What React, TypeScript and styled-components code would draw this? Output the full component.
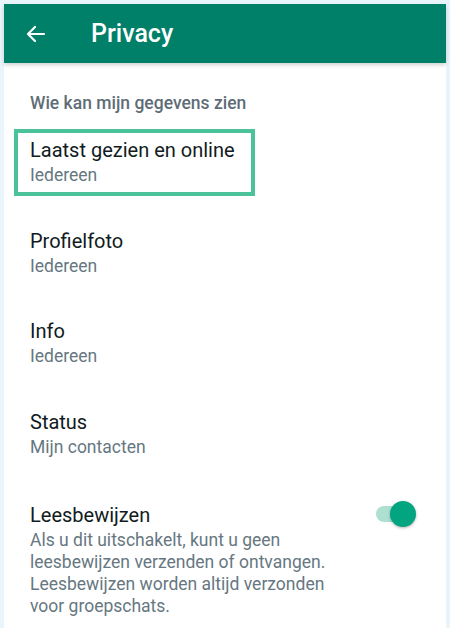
import React from "react";
import styled, { createGlobalStyle } from "styled-components";

const GlobalStyle = createGlobalStyle`
  html, body {
    margin: 0;
    padding: 0;
    background: #eaf4fb;
    font-family: Roboto, "Noto Sans", "Liberation Sans", sans-serif;
  }
`;

const Frame = styled.div`
  width: 450px;
  height: 628px;
  box-sizing: border-box;
  padding: 4px 4px 5px 4px;
  display: flex;
  flex-direction: column;
`;

const Header = styled.header`
  height: 59px;
  flex-shrink: 0;
  background: #008069;
  display: flex;
  align-items: center;
  padding-left: 20px;
  box-shadow: 0 2px 4px rgba(0, 0, 0, 0.18);
  position: relative;
  z-index: 1;
`;

const BackButton = styled.button`
  border: 0;
  background: none;
  padding: 0;
  display: flex;
  color: #fff;
  cursor: pointer;
`;

const Title = styled.h1`
  margin: 0 0 0 43px;
  font-size: 25px;
  font-weight: 500;
  color: #fff;
`;

const Card = styled.main`
  flex: 1;
  background: #fff;
  padding-top: 30px;
`;

const SectionTitle = styled.h2`
  margin: 0 0 16px 26px;
  font-size: 17.5px;
  line-height: 20px;
  font-weight: 500;
  color: #5f6d77;
`;

const Row = styled.div<{ $active?: boolean; $gap?: number }>`
  display: flex;
  align-items: flex-start;
  justify-content: space-between;
  margin: 0 0 ${(p) => p.$gap ?? 23.5}px 10px;
  padding: 3px 16px 6px 12px;
  border: 4px solid ${(p) => (p.$active ? "#4cc29a" : "transparent")};
  width: ${(p) => (p.$active ? "fit-content" : "auto")};
  margin-right: ${(p) => (p.$active ? "0" : "10px")};
`;

const Texts = styled.div`
  display: flex;
  flex-direction: column;
`;

const RowTitle = styled.div`
  font-size: 20px;
  line-height: 28px;
  color: #111b21;
`;

const RowSub = styled.div<{ $wrap?: boolean }>`
  font-size: 17.5px;
  line-height: 22px;
  color: #667781;
  max-width: ${(p) => (p.$wrap ? "310px" : "none")};
`;

const Toggle = styled.div`
  position: relative;
  width: 40px;
  height: 26px;
  flex-shrink: 0;
`;

const Track = styled.div`
  position: absolute;
  left: 0;
  top: 5px;
  width: 34px;
  height: 16px;
  border-radius: 8px;
  background: #aee0d1;
`;

const Knob = styled.div`
  position: absolute;
  right: 0;
  top: 0;
  width: 26px;
  height: 26px;
  border-radius: 50%;
  background: #03a581;
  box-shadow: 0 1px 3px rgba(0, 0, 0, 0.3);
`;

function ArrowLeft() {
  return (
    <svg width="24" height="24" viewBox="0 0 24 24" fill="none">
      <path
        d="M20 12H4.5M11 5l-7 7 7 7"
        stroke="#fff"
        strokeWidth="2.2"
        strokeLinecap="round"
        strokeLinejoin="round"
      />
    </svg>
  );
}

const items = [
  { title: "Profielfoto", sub: "Iedereen" },
  { title: "Info", sub: "Iedereen" },
  { title: "Status", sub: "Mijn contacten" },
];

export default function App() {
  return (
    <>
      <GlobalStyle />
      <Frame>
        <Header>
          <BackButton aria-label="Terug">
            <ArrowLeft />
          </BackButton>
          <Title>Privacy</Title>
        </Header>
        <Card>
          <SectionTitle>Wie kan mijn gegevens zien</SectionTitle>
          <Row $active>
            <Texts>
              <RowTitle>Laatst gezien en online</RowTitle>
              <RowSub>Iedereen</RowSub>
            </Texts>
          </Row>
          {items.map((it, i) => (
            <Row key={it.title} $gap={i === items.length - 1 ? 26.5 : 23.5}>
              <Texts>
                <RowTitle>{it.title}</RowTitle>
                <RowSub>{it.sub}</RowSub>
              </Texts>
            </Row>
          ))}
          <Row>
            <Texts>
              <RowTitle>Leesbewijzen</RowTitle>
              <RowSub $wrap>
                Als u dit uitschakelt, kunt u geen leesbewijzen verzenden of
                ontvangen. Leesbewijzen worden altijd verzonden voor
                groepschats.
              </RowSub>
            </Texts>
            <Toggle>
              <Track />
              <Knob />
            </Toggle>
          </Row>
        </Card>
      </Frame>
    </>
  );
}
